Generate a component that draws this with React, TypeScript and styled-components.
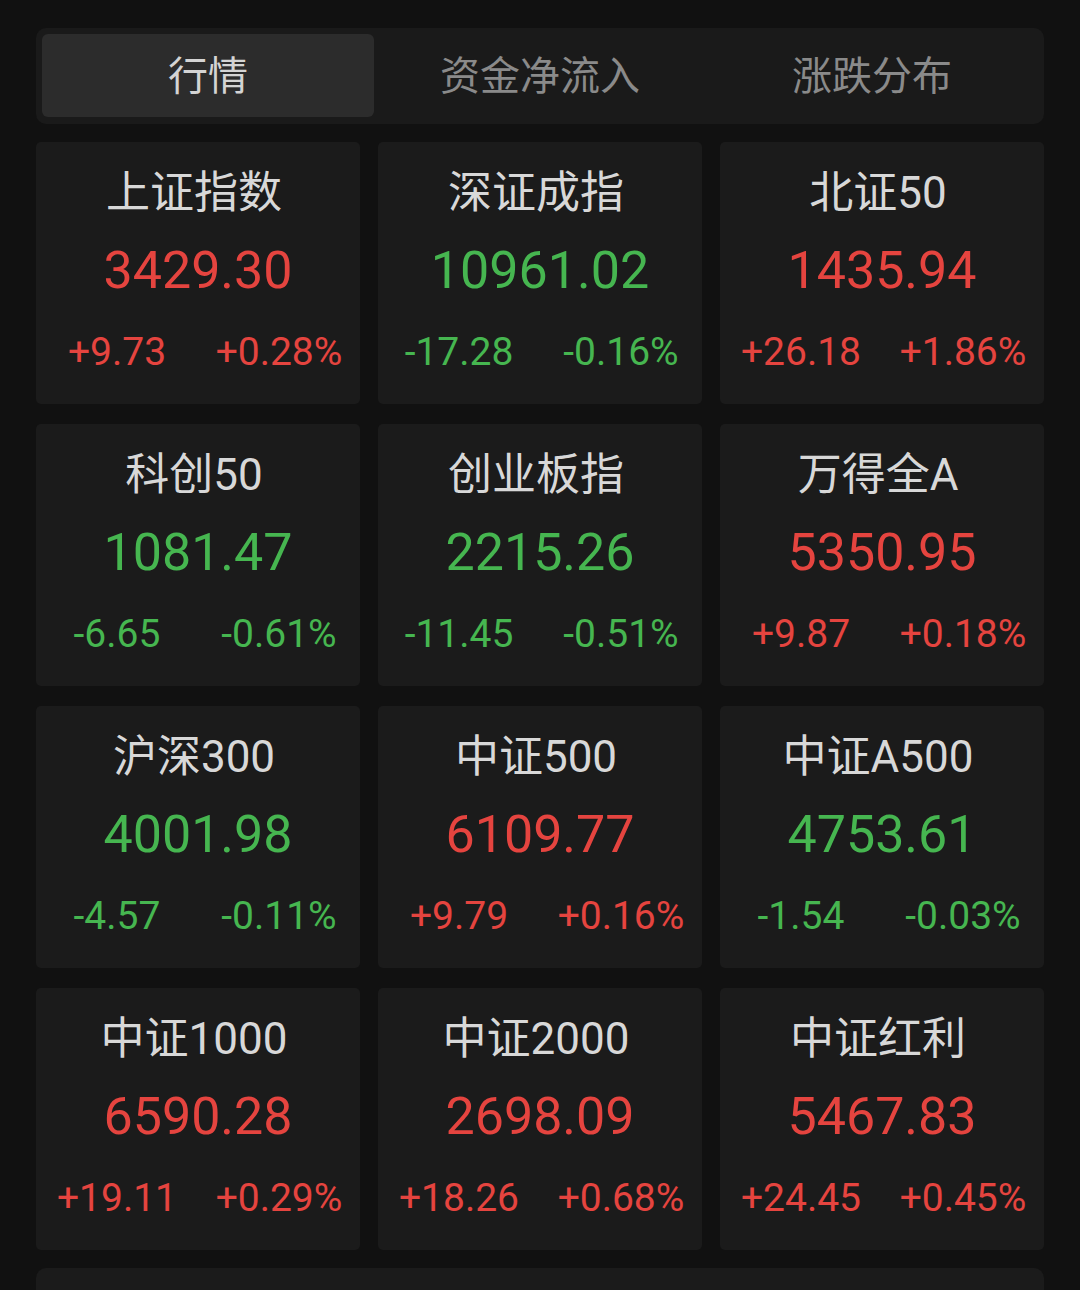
import React from 'react';
import styled, { createGlobalStyle } from 'styled-components';

const GlobalStyle = createGlobalStyle`
  html, body {
    margin: 0;
    padding: 0;
    background: #111111;
  }
  body {
    font-family: Roboto, "Noto Sans CJK SC", sans-serif;
  }
`;

const colors = {
  up: '#e5443f',
  down: '#46b650',
  title: '#d8d8d8',
  card: '#1b1b1b',
};

type Trend = 'up' | 'down';

interface IndexQuote {
  name: string;
  price: string;
  change: string;
  percent: string;
  trend: Trend;
}

const quotes: IndexQuote[] = [
  { name: '上证指数', price: '3429.30', change: '+9.73', percent: '+0.28%', trend: 'up' },
  { name: '深证成指', price: '10961.02', change: '-17.28', percent: '-0.16%', trend: 'down' },
  { name: '北证50', price: '1435.94', change: '+26.18', percent: '+1.86%', trend: 'up' },
  { name: '科创50', price: '1081.47', change: '-6.65', percent: '-0.61%', trend: 'down' },
  { name: '创业板指', price: '2215.26', change: '-11.45', percent: '-0.51%', trend: 'down' },
  { name: '万得全A', price: '5350.95', change: '+9.87', percent: '+0.18%', trend: 'up' },
  { name: '沪深300', price: '4001.98', change: '-4.57', percent: '-0.11%', trend: 'down' },
  { name: '中证500', price: '6109.77', change: '+9.79', percent: '+0.16%', trend: 'up' },
  { name: '中证A500', price: '4753.61', change: '-1.54', percent: '-0.03%', trend: 'down' },
  { name: '中证1000', price: '6590.28', change: '+19.11', percent: '+0.29%', trend: 'up' },
  { name: '中证2000', price: '2698.09', change: '+18.26', percent: '+0.68%', trend: 'up' },
  { name: '中证红利', price: '5467.83', change: '+24.45', percent: '+0.45%', trend: 'up' },
];

const tabs = ['行情', '资金净流入', '涨跌分布'];

const Page = styled.div`
  width: 1008px;
  padding: 28px 36px 0;
  height: 1290px;
  overflow: hidden;
  box-sizing: content-box;
`;

const TabBar = styled.div`
  display: grid;
  grid-template-columns: repeat(3, 1fr);
  padding: 6px 6px 7px;
  background: #1a1a1a;
  border-radius: 10px;
`;

const Tab = styled.div<{ $active?: boolean }>`
  height: 83px;
  box-sizing: border-box;
  padding-bottom: 5px;
  display: flex;
  align-items: center;
  justify-content: center;
  font-size: 40px;
  color: ${(p) => (p.$active ? '#d4d4d4' : '#8a8a8a')};
  background: ${(p) => (p.$active ? '#2c2c2c' : 'transparent')};
  border-radius: 6px;
`;

const Grid = styled.div`
  display: grid;
  grid-template-columns: repeat(3, 324px);
  column-gap: 18px;
  row-gap: 20px;
  margin-top: 18px;
`;

const Card = styled.div`
  height: 262px;
  box-sizing: border-box;
  padding-top: 23px;
  background: ${colors.card};
  border-radius: 5px;
  display: flex;
  flex-direction: column;
  align-items: stretch;
  text-align: center;
`;

const Title = styled.div`
  font-size: 44px;
  line-height: 56px;
  padding-right: 8px;
  color: ${colors.title};
`;

const Price = styled.div<{ $trend: Trend }>`
  margin-top: 18px;
  font-size: 52px;
  line-height: 64px;
  color: ${(p) => colors[p.$trend]};
`;

const ChangeRow = styled.div<{ $trend: Trend }>`
  margin-top: 25px;
  display: grid;
  grid-template-columns: 1fr 1fr;
  font-size: 39px;
  line-height: 48px;
  color: ${(p) => colors[p.$trend]};
`;

const Footer = styled.div`
  margin-top: 18px;
  height: 120px;
  background: ${colors.card};
  border-radius: 10px;
`;

const QuoteCard: React.FC<{ quote: IndexQuote }> = ({ quote }) => (
  <Card>
    <Title>{quote.name}</Title>
    <Price $trend={quote.trend}>{quote.price}</Price>
    <ChangeRow $trend={quote.trend}>
      <span>{quote.change}</span>
      <span>{quote.percent}</span>
    </ChangeRow>
  </Card>
);

const App: React.FC = () => (
  <>
    <GlobalStyle />
    <Page>
      <TabBar>
        {tabs.map((t, i) => (
          <Tab key={t} $active={i === 0}>
            {t}
          </Tab>
        ))}
      </TabBar>
      <Grid>
        {quotes.map((q) => (
          <QuoteCard key={q.name} quote={q} />
        ))}
      </Grid>
      <Footer />
    </Page>
  </>
);

export default App;
